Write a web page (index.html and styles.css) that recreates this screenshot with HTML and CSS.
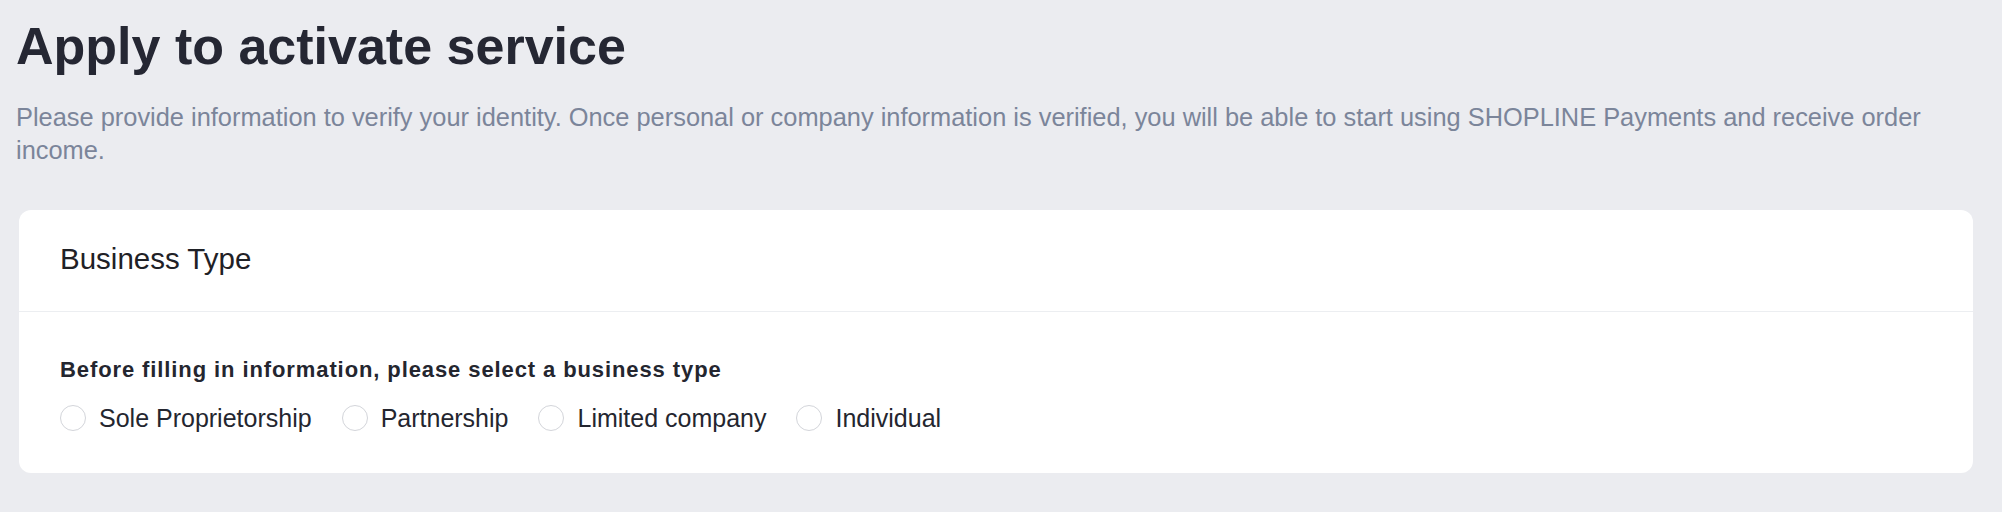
FILE: index.html
```html
<!DOCTYPE html>
<html lang="en">
<head>
<meta charset="utf-8">
<title>Apply to activate service</title>
<link rel="stylesheet" href="styles.css">
</head>
<body>
<main class="page">
  <h1 class="title">Apply to activate service</h1>
  <p class="desc">Please provide information to verify your identity. Once personal or company information is verified, you will be able to start using SHOPLINE Payments and receive order income.</p>
  <section class="card">
    <header class="card-head">Business Type</header>
    <div class="card-body">
      <div class="field-label">Before filling in information, please select a business type</div>
      <div class="radios">
        <label class="radio"><span class="dot"></span><span class="radio-text">Sole Proprietorship</span></label>
        <label class="radio"><span class="dot"></span><span class="radio-text">Partnership</span></label>
        <label class="radio"><span class="dot"></span><span class="radio-text">Limited company</span></label>
        <label class="radio"><span class="dot"></span><span class="radio-text">Individual</span></label>
      </div>
    </div>
  </section>
</main>
</body>
</html>
```
FILE: styles.css
```css
* { box-sizing: border-box; }
html, body { margin: 0; padding: 0; }
body {
  background: #ebecf0;
  font-family: "Liberation Sans", Arial, sans-serif;
  width: 2002px;
  height: 512px;
  overflow: hidden;
}
.page {
  padding: 14px 29px 0 16px;
}
.title {
  margin: 0;
  font-size: 52px;
  line-height: 64px;
  font-weight: 700;
  color: #252733;
}
.desc {
  margin: 23px 0 0 0;
  font-size: 25.4px;
  line-height: 33px;
  color: #7b859a;
}
.card {
  margin: 43px 0 0 3px;
  background: #ffffff;
  border-radius: 12px;
}
.card-head {
  padding: 29px 41px 32px;
  font-size: 29.5px;
  line-height: 40px;
  color: #1f2126;
  border-bottom: 1px solid #eceef1;
}
.card-body {
  padding: 44px 41px 38px;
}
.field-label {
  font-size: 22px;
  line-height: 28px;
  font-weight: 700;
  letter-spacing: 0.9px;
  color: #24262f;
}
.radios {
  margin-top: 17px;
  display: flex;
  align-items: center;
  gap: 30px;
}
.radio {
  display: flex;
  align-items: center;
  font-size: 25px;
  line-height: 34px;
  color: #24262f;
}
.dot {
  width: 26px;
  height: 26px;
  border: 1px solid #d3d5da;
  border-radius: 50%;
  margin-right: 13px;
  background: #fff;
}
```
